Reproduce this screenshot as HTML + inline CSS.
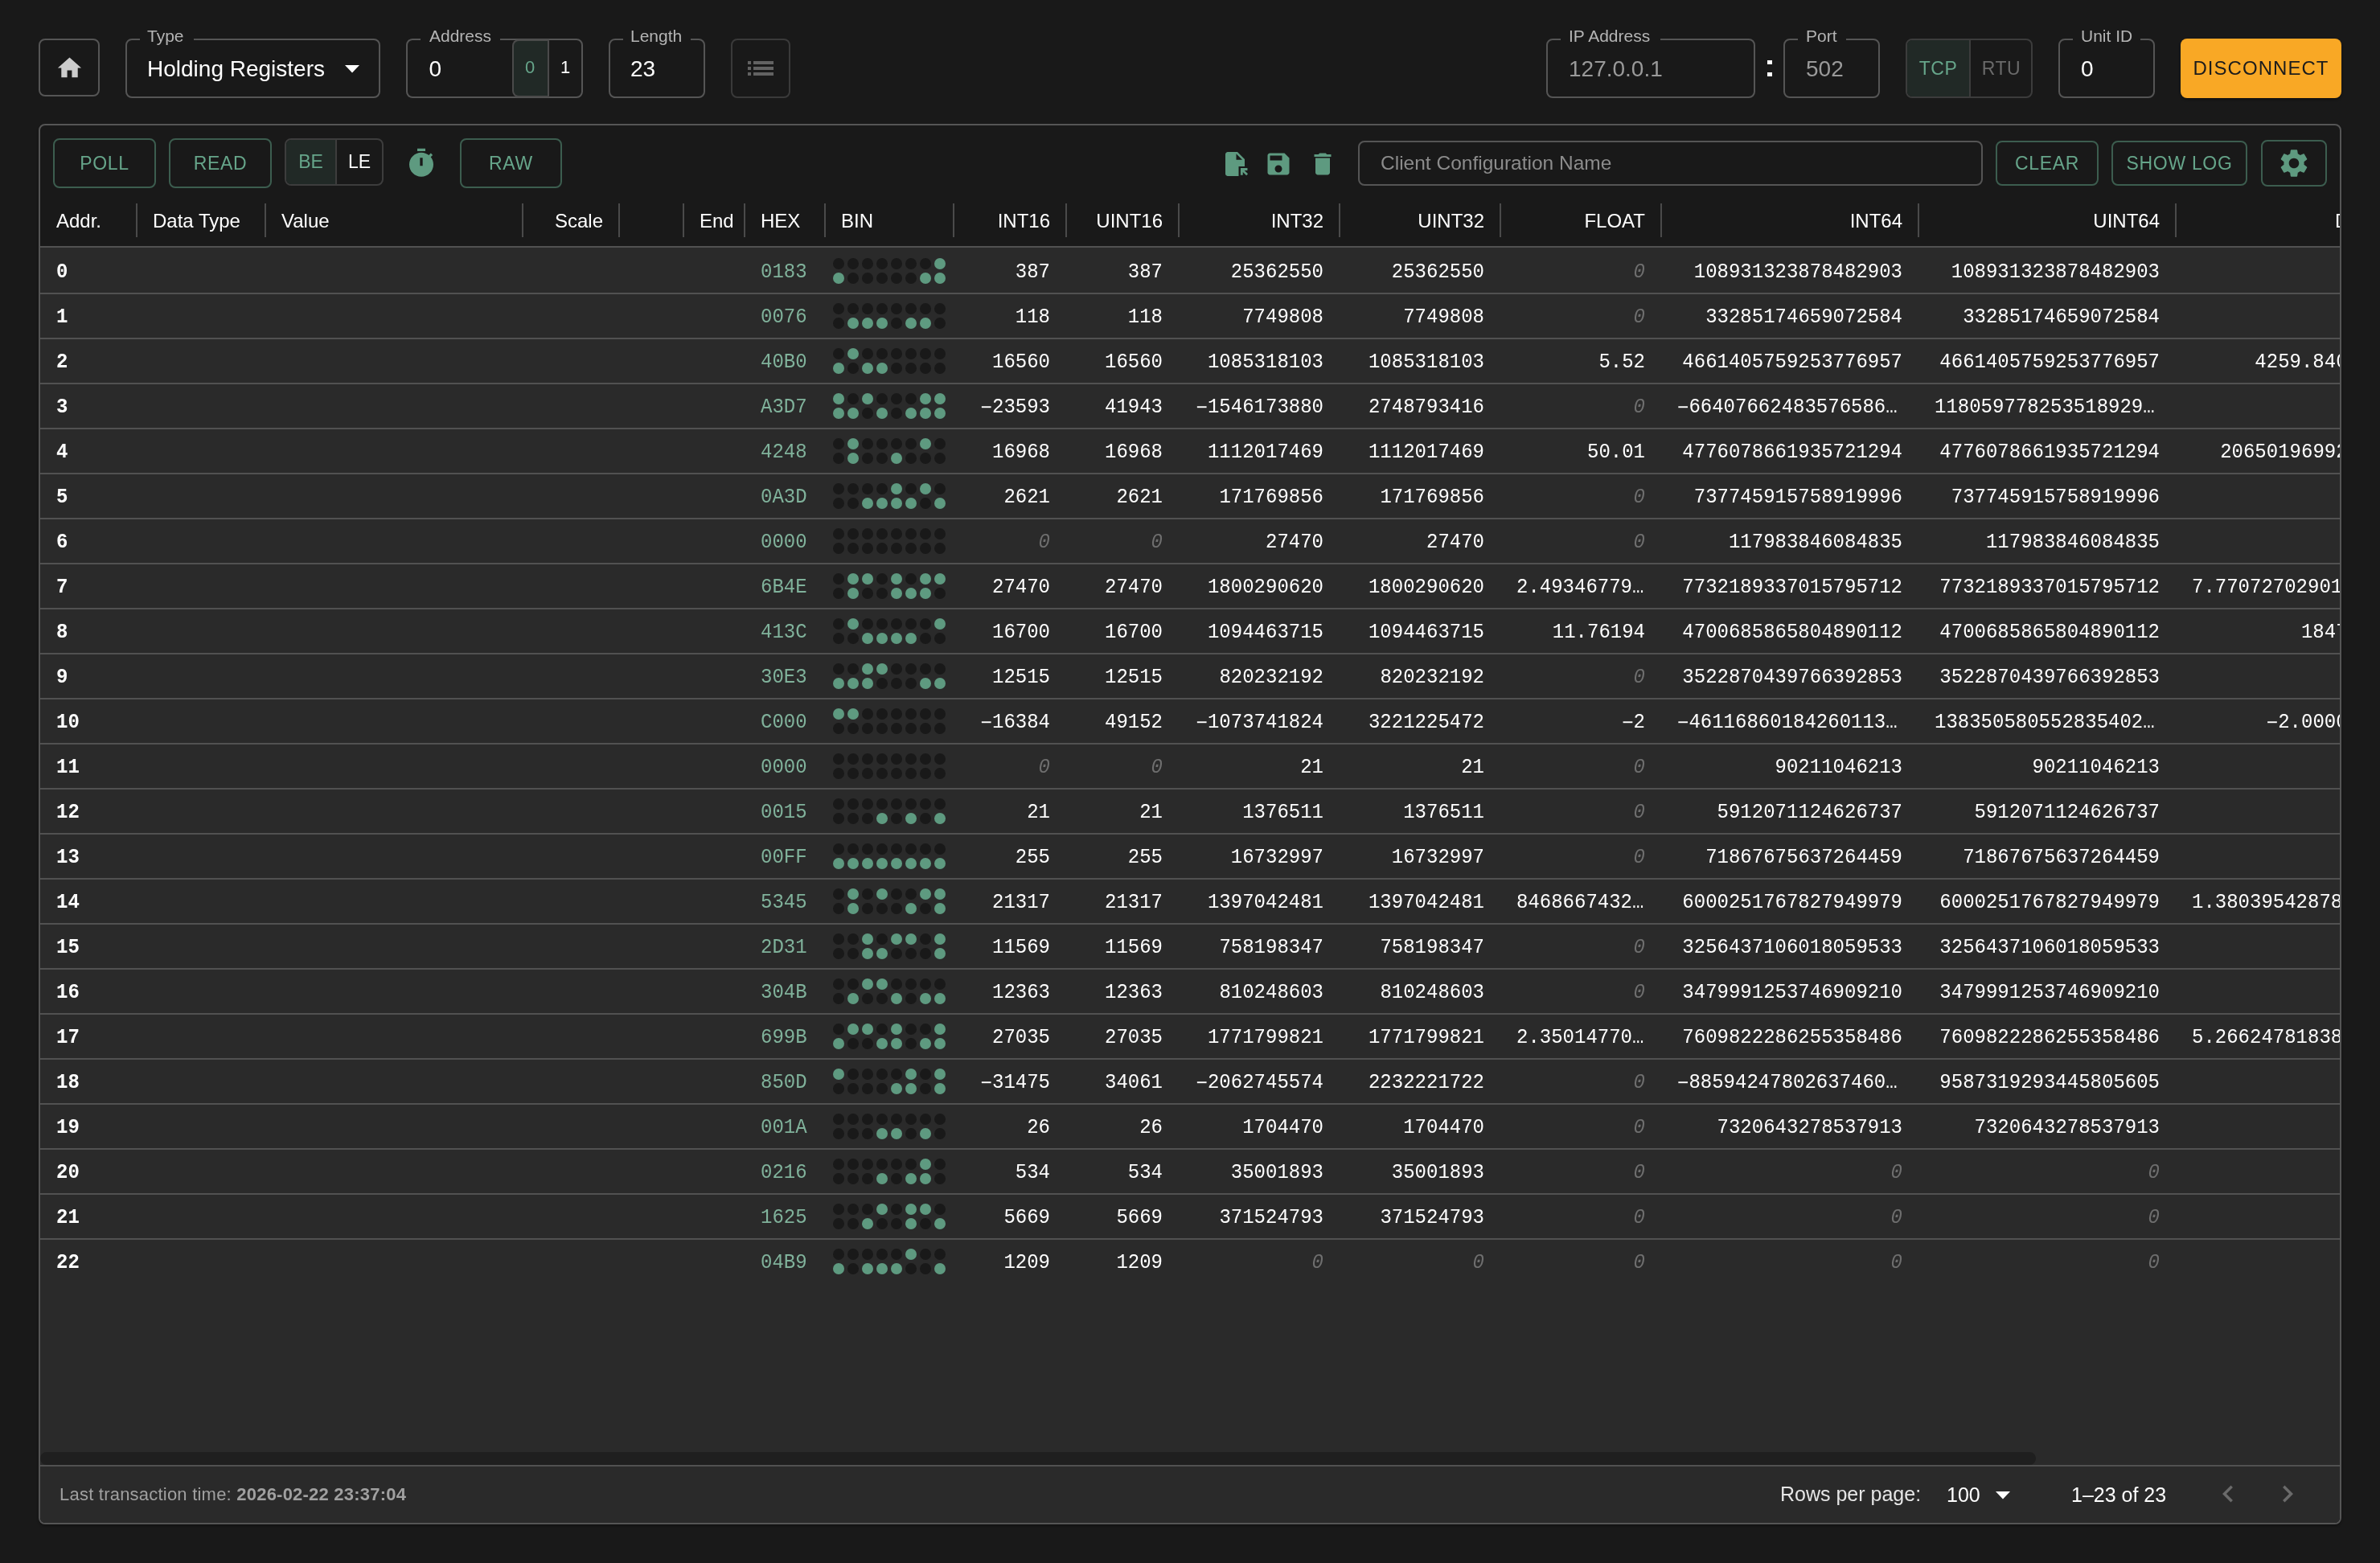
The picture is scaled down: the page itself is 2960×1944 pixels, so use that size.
<!DOCTYPE html>
<html><head><meta charset="utf-8"><title>Modbus Client</title>
<style>
*{box-sizing:border-box;margin:0;padding:0}
html,body{width:2960px;height:1944px;overflow:hidden;background:#191919}
body{position:relative;font-family:"Liberation Sans",sans-serif;color:#fff}
.a{position:absolute}
.box{position:absolute;border:2px solid #555555;border-radius:8px}
.lbl{position:absolute;font-size:21px;line-height:24px;color:#b4b4b4;white-space:nowrap}
.notch{position:absolute;height:4px;background:#191919}
.val{position:absolute;font-size:28px;line-height:32px;white-space:nowrap}
.gbtn{position:absolute;border:2px solid #3c5d4f;border-radius:8px;color:#66a58a;font-size:23px;letter-spacing:0.7px;text-align:center;white-space:nowrap}
.hd{position:absolute;top:259px;height:32px;line-height:32px;font-size:24px;white-space:nowrap}
.sep{position:absolute;top:253px;width:2px;height:42px;background:#4a4a4a}
.row{position:absolute;left:50px;width:2860px;height:56px}
.c{position:absolute;top:0;height:56px;line-height:56px;font-family:"Liberation Mono",monospace;font-size:24px;white-space:nowrap;overflow:hidden;padding-top:3px;transform:scaleY(1.07);transform-origin:0 37px}
.r{text-align:right}
.z{color:#6e6e6e;font-style:italic}
.el{text-overflow:ellipsis}
.dot{position:absolute;width:14px;height:14px;border-radius:7px;background:#191919}
.on{background:#5e9a80}
</style></head><body><div id="root" style="position:absolute;left:0;top:0;width:2960px;height:1944px;will-change:transform">

<div class="box" style="left:48px;top:48px;width:76px;height:72px"></div>
<svg class="a" style="left:68.5px;top:66.5px" width="35" height="35" viewBox="0 0 24 24"><path fill="#cccccc" d="M10 20v-6h4v6h5v-8h3L12 3 2 12h3v8z"/></svg>
<div class="box" style="left:156px;top:48px;width:317px;height:74px"></div>
<div class="notch" style="left:174px;top:47px;width:67px"></div>
<div class="lbl" style="left:183px;top:33px">Type</div>
<div class="val" style="left:183px;top:70px;color:#fff">Holding Registers</div>
<svg class="a" style="left:429px;top:81px" width="18" height="10" viewBox="0 0 18 10"><path fill="#fff" d="M0 0h18L9 9.5z"/></svg>
<div class="box" style="left:505px;top:48px;width:220px;height:74px"></div>
<div class="notch" style="left:523px;top:47px;width:99px"></div>
<div class="lbl" style="left:534px;top:33px">Address</div>
<div class="val" style="left:533.5px;top:70px;color:#fff">0</div>
<div class="a" style="left:637px;top:49px;width:46px;height:72px;background:#212926;border:2px solid #4a4a4a;border-right:none;border-radius:8px 0 0 8px"></div>
<div class="a" style="left:681px;top:49px;width:2px;height:72px;background:#4a4a4a"></div>
<div class="a" style="left:636px;top:66px;width:46px;text-align:center;font-size:22px;line-height:36px;color:#66a58a">0</div>
<div class="a" style="left:683px;top:66px;width:40px;text-align:center;font-size:22px;line-height:36px;color:#fff">1</div>
<div class="box" style="left:757px;top:48px;width:120px;height:74px"></div>
<div class="notch" style="left:775px;top:47px;width:84px"></div>
<div class="lbl" style="left:784px;top:33px">Length</div>
<div class="val" style="left:784px;top:70px;color:#fff">23</div>
<div class="box" style="left:909px;top:48px;width:74px;height:74px;border-color:#3a3a3a"></div>
<div class="a" style="left:930px;top:76px;width:4px;height:4px;background:#626262"></div>
<div class="a" style="left:937px;top:76px;width:25px;height:4px;background:#626262"></div>
<div class="a" style="left:930px;top:83px;width:4px;height:4px;background:#626262"></div>
<div class="a" style="left:937px;top:83px;width:25px;height:4px;background:#626262"></div>
<div class="a" style="left:930px;top:90px;width:4px;height:4px;background:#626262"></div>
<div class="a" style="left:937px;top:90px;width:25px;height:4px;background:#626262"></div>
<div class="box" style="left:1923px;top:48px;width:260px;height:74px"></div>
<div class="notch" style="left:1941px;top:47px;width:124px"></div>
<div class="lbl" style="left:1951px;top:33px">IP Address</div>
<div class="val" style="left:1951px;top:70px;color:#9a9a9a">127.0.0.1</div>
<div class="a" style="left:2198px;top:75px;width:6px;height:5px;background:#fff"></div><div class="a" style="left:2198px;top:90px;width:6px;height:5px;background:#fff"></div>
<div class="box" style="left:2218px;top:48px;width:120px;height:74px"></div>
<div class="notch" style="left:2236px;top:47px;width:60px"></div>
<div class="lbl" style="left:2246px;top:33px">Port</div>
<div class="val" style="left:2246px;top:70px;color:#9a9a9a">502</div>
<div class="box" style="left:2370px;top:48px;width:158px;height:74px;border-color:#3c3c3c"></div>
<div class="a" style="left:2372px;top:50px;width:77px;height:70px;background:#212926;border-radius:6px 0 0 6px"></div>
<div class="a" style="left:2449px;top:50px;width:2px;height:70px;background:#3c3c3c"></div>
<div class="a" style="left:2372px;top:67px;width:77px;text-align:center;font-size:23px;line-height:36px;color:#66a58a;letter-spacing:0.5px">TCP</div>
<div class="a" style="left:2451px;top:67px;width:76px;text-align:center;font-size:23px;line-height:36px;color:#6a6a6a;letter-spacing:0.5px">RTU</div>
<div class="box" style="left:2560px;top:48px;width:120px;height:74px"></div>
<div class="notch" style="left:2578px;top:47px;width:84px"></div>
<div class="lbl" style="left:2588px;top:33px">Unit ID</div>
<div class="val" style="left:2588px;top:70px;color:#fff">0</div>
<div class="a" style="left:2712px;top:48px;width:200px;height:74px;background:#f9a825;border-radius:8px;box-shadow:0 2px 3px rgba(0,0,0,.35);color:#1c1c1c;font-size:24px;line-height:74px;text-align:center;letter-spacing:1.05px">DISCONNECT</div>
<div class="a" style="left:48px;top:154px;width:2864px;height:1742px;border:2px solid #555555;border-radius:8px;overflow:hidden;box-shadow:0 2px 3px rgba(0,0,0,.3)">
</div>
<div class="gbtn" style="left:66px;top:172px;width:128px;height:62px;line-height:58px">POLL</div>
<div class="gbtn" style="left:210px;top:172px;width:128px;height:62px;line-height:58px">READ</div>
<div class="box" style="left:354px;top:172px;width:123px;height:59px;border-color:#3d3d3d"></div>
<div class="a" style="left:356px;top:174px;width:61px;height:55px;background:#212926;border-radius:6px 0 0 6px"></div>
<div class="a" style="left:417px;top:174px;width:2px;height:55px;background:#3d3d3d"></div>
<div class="a" style="left:356px;top:172px;width:61px;text-align:center;font-size:23px;line-height:59px;color:#66a58a">BE</div>
<div class="a" style="left:419px;top:172px;width:56px;text-align:center;font-size:23px;line-height:59px;color:#fff">LE</div>
<svg class="a" style="left:504px;top:183px" width="40" height="40" viewBox="0 0 24 24"><path fill="#5e9a80" d="M9 1h6v2H9zm10.03 6.39 1.42-1.42c-.43-.51-.9-.99-1.41-1.41l-1.42 1.42C16.07 4.74 14.12 4 12 4c-4.97 0-9 4.03-9 9s4.02 9 9 9 9-4.03 9-9c0-2.12-.74-4.07-1.97-5.61M13 14h-2V8h2z"/></svg>
<div class="gbtn" style="left:572px;top:172px;width:127px;height:62px;line-height:58px">RAW</div>
<svg class="a" style="left:1518px;top:186px" width="36" height="36" viewBox="0 0 24 24"><path fill="#5e9a80" d="M6 2h8l6 6v6h-5v8H6c-1.1 0-2-.9-2-2V4c0-1.1.9-2 2-2zm7 1.5V8.5h5z M16.6 15.4h5.7v1.9h-2.5l2.9 2.9-1.3 1.3-2.9-2.9v2.6h-1.9z" fill-rule="evenodd"/></svg>
<svg class="a" style="left:1572px;top:186px" width="36" height="36" viewBox="0 0 24 24"><path fill="#5e9a80" d="M17 3H5c-1.11 0-2 .9-2 2v14c0 1.1.89 2 2 2h14c1.1 0 2-.9 2-2V7zm-5 16c-1.66 0-3-1.34-3-3s1.34-3 3-3 3 1.34 3 3-1.34 3-3 3m3-10H5V5h10z"/></svg>
<svg class="a" style="left:1627px;top:186px" width="36" height="36" viewBox="0 0 24 24"><path fill="#5e9a80" d="M6 19c0 1.1.9 2 2 2h8c1.1 0 2-.9 2-2V7H6zM19 4h-3.5l-1-1h-5l-1 1H5v2h14z"/></svg>
<div class="box" style="left:1689px;top:175px;width:777px;height:56px"></div>
<div class="a" style="left:1717px;top:185px;font-size:24.5px;line-height:36px;color:#8c8c8c;white-space:nowrap">Client Configuration Name</div>
<div class="gbtn" style="left:2482px;top:175px;width:128px;height:56px;line-height:52px">CLEAR</div>
<div class="gbtn" style="left:2626px;top:175px;width:169px;height:56px;line-height:52px">SHOW LOG</div>
<div class="gbtn" style="left:2812px;top:174px;width:82px;height:58px"></div>
<svg class="a" style="left:2832px;top:182px" width="42" height="42" viewBox="0 0 24 24"><path fill="#5e9a80" d="M19.14 12.94c.04-.3.06-.61.06-.94 0-.32-.02-.64-.07-.94l2.03-1.58c.18-.14.23-.41.12-.61l-1.92-3.32c-.12-.22-.37-.29-.59-.22l-2.39.96c-.5-.38-1.03-.7-1.62-.94l-.36-2.54c-.04-.24-.24-.41-.48-.41h-3.84c-.24 0-.43.17-.47.41l-.36 2.54c-.59.24-1.13.57-1.62.94l-2.39-.96c-.22-.08-.47 0-.59.22L2.74 8.87c-.12.21-.08.47.12.61l2.03 1.58c-.05.3-.09.63-.09.94s.02.64.07.94l-2.03 1.58c-.18.14-.23.41-.12.61l1.92 3.32c.12.22.37.29.59.22l2.39-.96c.5.38 1.03.7 1.62.94l.36 2.54c.05.24.24.41.48.41h3.84c.24 0 .44-.17.47-.41l.36-2.54c.59-.24 1.13-.56 1.62-.94l2.39.96c.22.08.47 0 .59-.22l1.92-3.32c.12-.22.07-.47-.12-.61zM12 15.6c-1.98 0-3.6-1.62-3.6-3.6s1.62-3.6 3.6-3.6 3.6 1.62 3.6 3.6-1.62 3.6-3.6 3.6"/></svg>
<div class="a" style="left:50px;top:156px;width:2860px;height:1738px;overflow:hidden;border-radius:0 0 6px 6px">
<div class="hd" style="left:20px;top:103px">Addr.</div>
<div class="hd" style="left:140px;top:103px">Data Type</div>
<div class="hd" style="left:300px;top:103px">Value</div>
<div class="hd" style="left:600px;top:103px;width:100px;text-align:right">Scale</div>
<div class="hd" style="left:820px;top:103px">End</div>
<div class="hd" style="left:896px;top:103px">HEX</div>
<div class="hd" style="left:996px;top:103px">BIN</div>
<div class="hd" style="left:1136px;top:103px;width:120px;text-align:right">INT16</div>
<div class="hd" style="left:1276px;top:103px;width:120px;text-align:right">UINT16</div>
<div class="hd" style="left:1416px;top:103px;width:180px;text-align:right">INT32</div>
<div class="hd" style="left:1616px;top:103px;width:180px;text-align:right">UINT32</div>
<div class="hd" style="left:1816px;top:103px;width:180px;text-align:right">FLOAT</div>
<div class="hd" style="left:2016px;top:103px;width:300px;text-align:right">INT64</div>
<div class="hd" style="left:2336px;top:103px;width:300px;text-align:right">UINT64</div>
<div class="hd" style="left:2854px;top:103px">DOUBLE</div>
<div class="sep" style="left:119px;top:97px"></div>
<div class="sep" style="left:279px;top:97px"></div>
<div class="sep" style="left:599px;top:97px"></div>
<div class="sep" style="left:719px;top:97px"></div>
<div class="sep" style="left:799px;top:97px"></div>
<div class="sep" style="left:875px;top:97px"></div>
<div class="sep" style="left:975px;top:97px"></div>
<div class="sep" style="left:1135px;top:97px"></div>
<div class="sep" style="left:1275px;top:97px"></div>
<div class="sep" style="left:1415px;top:97px"></div>
<div class="sep" style="left:1615px;top:97px"></div>
<div class="sep" style="left:1815px;top:97px"></div>
<div class="sep" style="left:2015px;top:97px"></div>
<div class="sep" style="left:2335px;top:97px"></div>
<div class="sep" style="left:2655px;top:97px"></div>
<div class="a" style="left:0;top:150px;width:2860px;height:2px;background:#515151"></div>
<div class="a" style="left:0;top:152px;width:2860px;height:1514px;background:#2a2a2a"></div>
<div class="a" style="left:0;top:208px;width:2860px;height:2px;background:#515151"></div>
<div class="a" style="left:0;top:264px;width:2860px;height:2px;background:#515151"></div>
<div class="a" style="left:0;top:320px;width:2860px;height:2px;background:#515151"></div>
<div class="a" style="left:0;top:376px;width:2860px;height:2px;background:#515151"></div>
<div class="a" style="left:0;top:432px;width:2860px;height:2px;background:#515151"></div>
<div class="a" style="left:0;top:488px;width:2860px;height:2px;background:#515151"></div>
<div class="a" style="left:0;top:544px;width:2860px;height:2px;background:#515151"></div>
<div class="a" style="left:0;top:600px;width:2860px;height:2px;background:#515151"></div>
<div class="a" style="left:0;top:656px;width:2860px;height:2px;background:#515151"></div>
<div class="a" style="left:0;top:712px;width:2860px;height:2px;background:#515151"></div>
<div class="a" style="left:0;top:768px;width:2860px;height:2px;background:#515151"></div>
<div class="a" style="left:0;top:824px;width:2860px;height:2px;background:#515151"></div>
<div class="a" style="left:0;top:880px;width:2860px;height:2px;background:#515151"></div>
<div class="a" style="left:0;top:936px;width:2860px;height:2px;background:#515151"></div>
<div class="a" style="left:0;top:992px;width:2860px;height:2px;background:#515151"></div>
<div class="a" style="left:0;top:1048px;width:2860px;height:2px;background:#515151"></div>
<div class="a" style="left:0;top:1104px;width:2860px;height:2px;background:#515151"></div>
<div class="a" style="left:0;top:1160px;width:2860px;height:2px;background:#515151"></div>
<div class="a" style="left:0;top:1216px;width:2860px;height:2px;background:#515151"></div>
<div class="a" style="left:0;top:1272px;width:2860px;height:2px;background:#515151"></div>
<div class="a" style="left:0;top:1328px;width:2860px;height:2px;background:#515151"></div>
<div class="a" style="left:0;top:1384px;width:2860px;height:2px;background:#515151"></div>
<div class="row" style="left:0;top:152px">
<div class="c" style="left:20px;font-weight:bold">0</div>
<div class="c" style="left:896px;color:#80b29b">0183</div>
<div class="dot" style="left:986px;top:13px"></div>
<div class="dot" style="left:1004px;top:13px"></div>
<div class="dot" style="left:1022px;top:13px"></div>
<div class="dot" style="left:1040px;top:13px"></div>
<div class="dot" style="left:1058px;top:13px"></div>
<div class="dot" style="left:1076px;top:13px"></div>
<div class="dot" style="left:1094px;top:13px"></div>
<div class="dot on" style="left:1112px;top:13px"></div>
<div class="dot on" style="left:986px;top:31px"></div>
<div class="dot" style="left:1004px;top:31px"></div>
<div class="dot" style="left:1022px;top:31px"></div>
<div class="dot" style="left:1040px;top:31px"></div>
<div class="dot" style="left:1058px;top:31px"></div>
<div class="dot" style="left:1076px;top:31px"></div>
<div class="dot on" style="left:1094px;top:31px"></div>
<div class="dot on" style="left:1112px;top:31px"></div>
<div class="c r" style="left:1156px;width:100px">387</div>
<div class="c r" style="left:1296px;width:100px">387</div>
<div class="c r" style="left:1436px;width:160px">25362550</div>
<div class="c r" style="left:1636px;width:160px">25362550</div>
<div class="c r z" style="left:1836px;width:160px">0</div>
<div class="c r" style="left:2036px;width:280px">108931323878482903</div>
<div class="c r" style="left:2356px;width:280px">108931323878482903</div>
<div class="c r z" style="left:2676px;width:280px">0</div>
</div>
<div class="row" style="left:0;top:208px">
<div class="c" style="left:20px;font-weight:bold">1</div>
<div class="c" style="left:896px;color:#80b29b">0076</div>
<div class="dot" style="left:986px;top:13px"></div>
<div class="dot" style="left:1004px;top:13px"></div>
<div class="dot" style="left:1022px;top:13px"></div>
<div class="dot" style="left:1040px;top:13px"></div>
<div class="dot" style="left:1058px;top:13px"></div>
<div class="dot" style="left:1076px;top:13px"></div>
<div class="dot" style="left:1094px;top:13px"></div>
<div class="dot" style="left:1112px;top:13px"></div>
<div class="dot" style="left:986px;top:31px"></div>
<div class="dot on" style="left:1004px;top:31px"></div>
<div class="dot on" style="left:1022px;top:31px"></div>
<div class="dot on" style="left:1040px;top:31px"></div>
<div class="dot" style="left:1058px;top:31px"></div>
<div class="dot on" style="left:1076px;top:31px"></div>
<div class="dot on" style="left:1094px;top:31px"></div>
<div class="dot" style="left:1112px;top:31px"></div>
<div class="c r" style="left:1156px;width:100px">118</div>
<div class="c r" style="left:1296px;width:100px">118</div>
<div class="c r" style="left:1436px;width:160px">7749808</div>
<div class="c r" style="left:1636px;width:160px">7749808</div>
<div class="c r z" style="left:1836px;width:160px">0</div>
<div class="c r" style="left:2036px;width:280px">33285174659072584</div>
<div class="c r" style="left:2356px;width:280px">33285174659072584</div>
<div class="c r z" style="left:2676px;width:280px">0</div>
</div>
<div class="row" style="left:0;top:264px">
<div class="c" style="left:20px;font-weight:bold">2</div>
<div class="c" style="left:896px;color:#80b29b">40B0</div>
<div class="dot" style="left:986px;top:13px"></div>
<div class="dot on" style="left:1004px;top:13px"></div>
<div class="dot" style="left:1022px;top:13px"></div>
<div class="dot" style="left:1040px;top:13px"></div>
<div class="dot" style="left:1058px;top:13px"></div>
<div class="dot" style="left:1076px;top:13px"></div>
<div class="dot" style="left:1094px;top:13px"></div>
<div class="dot" style="left:1112px;top:13px"></div>
<div class="dot on" style="left:986px;top:31px"></div>
<div class="dot" style="left:1004px;top:31px"></div>
<div class="dot on" style="left:1022px;top:31px"></div>
<div class="dot on" style="left:1040px;top:31px"></div>
<div class="dot" style="left:1058px;top:31px"></div>
<div class="dot" style="left:1076px;top:31px"></div>
<div class="dot" style="left:1094px;top:31px"></div>
<div class="dot" style="left:1112px;top:31px"></div>
<div class="c r" style="left:1156px;width:100px">16560</div>
<div class="c r" style="left:1296px;width:100px">16560</div>
<div class="c r" style="left:1436px;width:160px">1085318103</div>
<div class="c r" style="left:1636px;width:160px">1085318103</div>
<div class="c r" style="left:1836px;width:160px">5.52</div>
<div class="c r" style="left:2036px;width:280px">4661405759253776957</div>
<div class="c r" style="left:2356px;width:280px">4661405759253776957</div>
<div class="c r" style="left:2676px;width:280px">4259.840855124</div>
</div>
<div class="row" style="left:0;top:320px">
<div class="c" style="left:20px;font-weight:bold">3</div>
<div class="c" style="left:896px;color:#80b29b">A3D7</div>
<div class="dot on" style="left:986px;top:13px"></div>
<div class="dot" style="left:1004px;top:13px"></div>
<div class="dot on" style="left:1022px;top:13px"></div>
<div class="dot" style="left:1040px;top:13px"></div>
<div class="dot" style="left:1058px;top:13px"></div>
<div class="dot" style="left:1076px;top:13px"></div>
<div class="dot on" style="left:1094px;top:13px"></div>
<div class="dot on" style="left:1112px;top:13px"></div>
<div class="dot on" style="left:986px;top:31px"></div>
<div class="dot on" style="left:1004px;top:31px"></div>
<div class="dot" style="left:1022px;top:31px"></div>
<div class="dot on" style="left:1040px;top:31px"></div>
<div class="dot" style="left:1058px;top:31px"></div>
<div class="dot on" style="left:1076px;top:31px"></div>
<div class="dot on" style="left:1094px;top:31px"></div>
<div class="dot on" style="left:1112px;top:31px"></div>
<div class="c r" style="left:1156px;width:100px"><span style="position:relative;top:2px">−</span>23593</div>
<div class="c r" style="left:1296px;width:100px">41943</div>
<div class="c r" style="left:1436px;width:160px"><span style="position:relative;top:2px">−</span>1546173880</div>
<div class="c r" style="left:1636px;width:160px">2748793416</div>
<div class="c r z" style="left:1836px;width:160px">0</div>
<div class="c el" style="left:2036px;width:280px"><span style="position:relative;top:2px">−</span>66407662483576586…</div>
<div class="c el" style="left:2356px;width:280px">118059778253518929…</div>
<div class="c r z" style="left:2676px;width:280px">0</div>
</div>
<div class="row" style="left:0;top:376px">
<div class="c" style="left:20px;font-weight:bold">4</div>
<div class="c" style="left:896px;color:#80b29b">4248</div>
<div class="dot" style="left:986px;top:13px"></div>
<div class="dot on" style="left:1004px;top:13px"></div>
<div class="dot" style="left:1022px;top:13px"></div>
<div class="dot" style="left:1040px;top:13px"></div>
<div class="dot" style="left:1058px;top:13px"></div>
<div class="dot" style="left:1076px;top:13px"></div>
<div class="dot on" style="left:1094px;top:13px"></div>
<div class="dot" style="left:1112px;top:13px"></div>
<div class="dot" style="left:986px;top:31px"></div>
<div class="dot on" style="left:1004px;top:31px"></div>
<div class="dot" style="left:1022px;top:31px"></div>
<div class="dot" style="left:1040px;top:31px"></div>
<div class="dot on" style="left:1058px;top:31px"></div>
<div class="dot" style="left:1076px;top:31px"></div>
<div class="dot" style="left:1094px;top:31px"></div>
<div class="dot" style="left:1112px;top:31px"></div>
<div class="c r" style="left:1156px;width:100px">16968</div>
<div class="c r" style="left:1296px;width:100px">16968</div>
<div class="c r" style="left:1436px;width:160px">1112017469</div>
<div class="c r" style="left:1636px;width:160px">1112017469</div>
<div class="c r" style="left:1836px;width:160px">50.01</div>
<div class="c r" style="left:2036px;width:280px">4776078661935721294</div>
<div class="c r" style="left:2356px;width:280px">4776078661935721294</div>
<div class="c r" style="left:2676px;width:280px">206501969920.8383</div>
</div>
<div class="row" style="left:0;top:432px">
<div class="c" style="left:20px;font-weight:bold">5</div>
<div class="c" style="left:896px;color:#80b29b">0A3D</div>
<div class="dot" style="left:986px;top:13px"></div>
<div class="dot" style="left:1004px;top:13px"></div>
<div class="dot" style="left:1022px;top:13px"></div>
<div class="dot" style="left:1040px;top:13px"></div>
<div class="dot on" style="left:1058px;top:13px"></div>
<div class="dot" style="left:1076px;top:13px"></div>
<div class="dot on" style="left:1094px;top:13px"></div>
<div class="dot" style="left:1112px;top:13px"></div>
<div class="dot" style="left:986px;top:31px"></div>
<div class="dot" style="left:1004px;top:31px"></div>
<div class="dot on" style="left:1022px;top:31px"></div>
<div class="dot on" style="left:1040px;top:31px"></div>
<div class="dot on" style="left:1058px;top:31px"></div>
<div class="dot on" style="left:1076px;top:31px"></div>
<div class="dot" style="left:1094px;top:31px"></div>
<div class="dot on" style="left:1112px;top:31px"></div>
<div class="c r" style="left:1156px;width:100px">2621</div>
<div class="c r" style="left:1296px;width:100px">2621</div>
<div class="c r" style="left:1436px;width:160px">171769856</div>
<div class="c r" style="left:1636px;width:160px">171769856</div>
<div class="c r z" style="left:1836px;width:160px">0</div>
<div class="c r" style="left:2036px;width:280px">737745915758919996</div>
<div class="c r" style="left:2356px;width:280px">737745915758919996</div>
<div class="c r z" style="left:2676px;width:280px">0</div>
</div>
<div class="row" style="left:0;top:488px">
<div class="c" style="left:20px;font-weight:bold">6</div>
<div class="c" style="left:896px;color:#80b29b">0000</div>
<div class="dot" style="left:986px;top:13px"></div>
<div class="dot" style="left:1004px;top:13px"></div>
<div class="dot" style="left:1022px;top:13px"></div>
<div class="dot" style="left:1040px;top:13px"></div>
<div class="dot" style="left:1058px;top:13px"></div>
<div class="dot" style="left:1076px;top:13px"></div>
<div class="dot" style="left:1094px;top:13px"></div>
<div class="dot" style="left:1112px;top:13px"></div>
<div class="dot" style="left:986px;top:31px"></div>
<div class="dot" style="left:1004px;top:31px"></div>
<div class="dot" style="left:1022px;top:31px"></div>
<div class="dot" style="left:1040px;top:31px"></div>
<div class="dot" style="left:1058px;top:31px"></div>
<div class="dot" style="left:1076px;top:31px"></div>
<div class="dot" style="left:1094px;top:31px"></div>
<div class="dot" style="left:1112px;top:31px"></div>
<div class="c r z" style="left:1156px;width:100px">0</div>
<div class="c r z" style="left:1296px;width:100px">0</div>
<div class="c r" style="left:1436px;width:160px">27470</div>
<div class="c r" style="left:1636px;width:160px">27470</div>
<div class="c r z" style="left:1836px;width:160px">0</div>
<div class="c r" style="left:2036px;width:280px">117983846084835</div>
<div class="c r" style="left:2356px;width:280px">117983846084835</div>
<div class="c r z" style="left:2676px;width:280px">0</div>
</div>
<div class="row" style="left:0;top:544px">
<div class="c" style="left:20px;font-weight:bold">7</div>
<div class="c" style="left:896px;color:#80b29b">6B4E</div>
<div class="dot" style="left:986px;top:13px"></div>
<div class="dot on" style="left:1004px;top:13px"></div>
<div class="dot on" style="left:1022px;top:13px"></div>
<div class="dot" style="left:1040px;top:13px"></div>
<div class="dot on" style="left:1058px;top:13px"></div>
<div class="dot" style="left:1076px;top:13px"></div>
<div class="dot on" style="left:1094px;top:13px"></div>
<div class="dot on" style="left:1112px;top:13px"></div>
<div class="dot" style="left:986px;top:31px"></div>
<div class="dot on" style="left:1004px;top:31px"></div>
<div class="dot" style="left:1022px;top:31px"></div>
<div class="dot" style="left:1040px;top:31px"></div>
<div class="dot on" style="left:1058px;top:31px"></div>
<div class="dot on" style="left:1076px;top:31px"></div>
<div class="dot on" style="left:1094px;top:31px"></div>
<div class="dot" style="left:1112px;top:31px"></div>
<div class="c r" style="left:1156px;width:100px">27470</div>
<div class="c r" style="left:1296px;width:100px">27470</div>
<div class="c r" style="left:1436px;width:160px">1800290620</div>
<div class="c r" style="left:1636px;width:160px">1800290620</div>
<div class="c el" style="left:1836px;width:160px">2.49346779…</div>
<div class="c r" style="left:2036px;width:280px">7732189337015795712</div>
<div class="c r" style="left:2356px;width:280px">7732189337015795712</div>
<div class="c el" style="left:2676px;width:280px">7.770727029016266e…</div>
</div>
<div class="row" style="left:0;top:600px">
<div class="c" style="left:20px;font-weight:bold">8</div>
<div class="c" style="left:896px;color:#80b29b">413C</div>
<div class="dot" style="left:986px;top:13px"></div>
<div class="dot on" style="left:1004px;top:13px"></div>
<div class="dot" style="left:1022px;top:13px"></div>
<div class="dot" style="left:1040px;top:13px"></div>
<div class="dot" style="left:1058px;top:13px"></div>
<div class="dot" style="left:1076px;top:13px"></div>
<div class="dot" style="left:1094px;top:13px"></div>
<div class="dot on" style="left:1112px;top:13px"></div>
<div class="dot" style="left:986px;top:31px"></div>
<div class="dot" style="left:1004px;top:31px"></div>
<div class="dot on" style="left:1022px;top:31px"></div>
<div class="dot on" style="left:1040px;top:31px"></div>
<div class="dot on" style="left:1058px;top:31px"></div>
<div class="dot on" style="left:1076px;top:31px"></div>
<div class="dot" style="left:1094px;top:31px"></div>
<div class="dot" style="left:1112px;top:31px"></div>
<div class="c r" style="left:1156px;width:100px">16700</div>
<div class="c r" style="left:1296px;width:100px">16700</div>
<div class="c r" style="left:1436px;width:160px">1094463715</div>
<div class="c r" style="left:1636px;width:160px">1094463715</div>
<div class="c r" style="left:1836px;width:160px">11.76194</div>
<div class="c r" style="left:2036px;width:280px">4700685865804890112</div>
<div class="c r" style="left:2356px;width:280px">4700685865804890112</div>
<div class="c r" style="left:2676px;width:280px">1847523.75</div>
</div>
<div class="row" style="left:0;top:656px">
<div class="c" style="left:20px;font-weight:bold">9</div>
<div class="c" style="left:896px;color:#80b29b">30E3</div>
<div class="dot" style="left:986px;top:13px"></div>
<div class="dot" style="left:1004px;top:13px"></div>
<div class="dot on" style="left:1022px;top:13px"></div>
<div class="dot on" style="left:1040px;top:13px"></div>
<div class="dot" style="left:1058px;top:13px"></div>
<div class="dot" style="left:1076px;top:13px"></div>
<div class="dot" style="left:1094px;top:13px"></div>
<div class="dot" style="left:1112px;top:13px"></div>
<div class="dot on" style="left:986px;top:31px"></div>
<div class="dot on" style="left:1004px;top:31px"></div>
<div class="dot on" style="left:1022px;top:31px"></div>
<div class="dot" style="left:1040px;top:31px"></div>
<div class="dot" style="left:1058px;top:31px"></div>
<div class="dot" style="left:1076px;top:31px"></div>
<div class="dot on" style="left:1094px;top:31px"></div>
<div class="dot on" style="left:1112px;top:31px"></div>
<div class="c r" style="left:1156px;width:100px">12515</div>
<div class="c r" style="left:1296px;width:100px">12515</div>
<div class="c r" style="left:1436px;width:160px">820232192</div>
<div class="c r" style="left:1636px;width:160px">820232192</div>
<div class="c r z" style="left:1836px;width:160px">0</div>
<div class="c r" style="left:2036px;width:280px">3522870439766392853</div>
<div class="c r" style="left:2356px;width:280px">3522870439766392853</div>
<div class="c r z" style="left:2676px;width:280px">0</div>
</div>
<div class="row" style="left:0;top:712px">
<div class="c" style="left:20px;font-weight:bold">10</div>
<div class="c" style="left:896px;color:#80b29b">C000</div>
<div class="dot on" style="left:986px;top:13px"></div>
<div class="dot on" style="left:1004px;top:13px"></div>
<div class="dot" style="left:1022px;top:13px"></div>
<div class="dot" style="left:1040px;top:13px"></div>
<div class="dot" style="left:1058px;top:13px"></div>
<div class="dot" style="left:1076px;top:13px"></div>
<div class="dot" style="left:1094px;top:13px"></div>
<div class="dot" style="left:1112px;top:13px"></div>
<div class="dot" style="left:986px;top:31px"></div>
<div class="dot" style="left:1004px;top:31px"></div>
<div class="dot" style="left:1022px;top:31px"></div>
<div class="dot" style="left:1040px;top:31px"></div>
<div class="dot" style="left:1058px;top:31px"></div>
<div class="dot" style="left:1076px;top:31px"></div>
<div class="dot" style="left:1094px;top:31px"></div>
<div class="dot" style="left:1112px;top:31px"></div>
<div class="c r" style="left:1156px;width:100px"><span style="position:relative;top:2px">−</span>16384</div>
<div class="c r" style="left:1296px;width:100px">49152</div>
<div class="c r" style="left:1436px;width:160px"><span style="position:relative;top:2px">−</span>1073741824</div>
<div class="c r" style="left:1636px;width:160px">3221225472</div>
<div class="c r" style="left:1836px;width:160px"><span style="position:relative;top:2px">−</span>2</div>
<div class="c el" style="left:2036px;width:280px"><span style="position:relative;top:2px">−</span>46116860184260113…</div>
<div class="c el" style="left:2356px;width:280px">138350580552835402…</div>
<div class="c r" style="left:2676px;width:280px"><span style="position:relative;top:2px">−</span>2.0000000006</div>
</div>
<div class="row" style="left:0;top:768px">
<div class="c" style="left:20px;font-weight:bold">11</div>
<div class="c" style="left:896px;color:#80b29b">0000</div>
<div class="dot" style="left:986px;top:13px"></div>
<div class="dot" style="left:1004px;top:13px"></div>
<div class="dot" style="left:1022px;top:13px"></div>
<div class="dot" style="left:1040px;top:13px"></div>
<div class="dot" style="left:1058px;top:13px"></div>
<div class="dot" style="left:1076px;top:13px"></div>
<div class="dot" style="left:1094px;top:13px"></div>
<div class="dot" style="left:1112px;top:13px"></div>
<div class="dot" style="left:986px;top:31px"></div>
<div class="dot" style="left:1004px;top:31px"></div>
<div class="dot" style="left:1022px;top:31px"></div>
<div class="dot" style="left:1040px;top:31px"></div>
<div class="dot" style="left:1058px;top:31px"></div>
<div class="dot" style="left:1076px;top:31px"></div>
<div class="dot" style="left:1094px;top:31px"></div>
<div class="dot" style="left:1112px;top:31px"></div>
<div class="c r z" style="left:1156px;width:100px">0</div>
<div class="c r z" style="left:1296px;width:100px">0</div>
<div class="c r" style="left:1436px;width:160px">21</div>
<div class="c r" style="left:1636px;width:160px">21</div>
<div class="c r z" style="left:1836px;width:160px">0</div>
<div class="c r" style="left:2036px;width:280px">90211046213</div>
<div class="c r" style="left:2356px;width:280px">90211046213</div>
<div class="c r z" style="left:2676px;width:280px">0</div>
</div>
<div class="row" style="left:0;top:824px">
<div class="c" style="left:20px;font-weight:bold">12</div>
<div class="c" style="left:896px;color:#80b29b">0015</div>
<div class="dot" style="left:986px;top:13px"></div>
<div class="dot" style="left:1004px;top:13px"></div>
<div class="dot" style="left:1022px;top:13px"></div>
<div class="dot" style="left:1040px;top:13px"></div>
<div class="dot" style="left:1058px;top:13px"></div>
<div class="dot" style="left:1076px;top:13px"></div>
<div class="dot" style="left:1094px;top:13px"></div>
<div class="dot" style="left:1112px;top:13px"></div>
<div class="dot" style="left:986px;top:31px"></div>
<div class="dot" style="left:1004px;top:31px"></div>
<div class="dot" style="left:1022px;top:31px"></div>
<div class="dot on" style="left:1040px;top:31px"></div>
<div class="dot" style="left:1058px;top:31px"></div>
<div class="dot on" style="left:1076px;top:31px"></div>
<div class="dot" style="left:1094px;top:31px"></div>
<div class="dot on" style="left:1112px;top:31px"></div>
<div class="c r" style="left:1156px;width:100px">21</div>
<div class="c r" style="left:1296px;width:100px">21</div>
<div class="c r" style="left:1436px;width:160px">1376511</div>
<div class="c r" style="left:1636px;width:160px">1376511</div>
<div class="c r z" style="left:1836px;width:160px">0</div>
<div class="c r" style="left:2036px;width:280px">5912071124626737</div>
<div class="c r" style="left:2356px;width:280px">5912071124626737</div>
<div class="c r z" style="left:2676px;width:280px">0</div>
</div>
<div class="row" style="left:0;top:880px">
<div class="c" style="left:20px;font-weight:bold">13</div>
<div class="c" style="left:896px;color:#80b29b">00FF</div>
<div class="dot" style="left:986px;top:13px"></div>
<div class="dot" style="left:1004px;top:13px"></div>
<div class="dot" style="left:1022px;top:13px"></div>
<div class="dot" style="left:1040px;top:13px"></div>
<div class="dot" style="left:1058px;top:13px"></div>
<div class="dot" style="left:1076px;top:13px"></div>
<div class="dot" style="left:1094px;top:13px"></div>
<div class="dot" style="left:1112px;top:13px"></div>
<div class="dot on" style="left:986px;top:31px"></div>
<div class="dot on" style="left:1004px;top:31px"></div>
<div class="dot on" style="left:1022px;top:31px"></div>
<div class="dot on" style="left:1040px;top:31px"></div>
<div class="dot on" style="left:1058px;top:31px"></div>
<div class="dot on" style="left:1076px;top:31px"></div>
<div class="dot on" style="left:1094px;top:31px"></div>
<div class="dot on" style="left:1112px;top:31px"></div>
<div class="c r" style="left:1156px;width:100px">255</div>
<div class="c r" style="left:1296px;width:100px">255</div>
<div class="c r" style="left:1436px;width:160px">16732997</div>
<div class="c r" style="left:1636px;width:160px">16732997</div>
<div class="c r z" style="left:1836px;width:160px">0</div>
<div class="c r" style="left:2036px;width:280px">71867675637264459</div>
<div class="c r" style="left:2356px;width:280px">71867675637264459</div>
<div class="c r z" style="left:2676px;width:280px">0</div>
</div>
<div class="row" style="left:0;top:936px">
<div class="c" style="left:20px;font-weight:bold">14</div>
<div class="c" style="left:896px;color:#80b29b">5345</div>
<div class="dot" style="left:986px;top:13px"></div>
<div class="dot on" style="left:1004px;top:13px"></div>
<div class="dot" style="left:1022px;top:13px"></div>
<div class="dot on" style="left:1040px;top:13px"></div>
<div class="dot" style="left:1058px;top:13px"></div>
<div class="dot" style="left:1076px;top:13px"></div>
<div class="dot on" style="left:1094px;top:13px"></div>
<div class="dot on" style="left:1112px;top:13px"></div>
<div class="dot" style="left:986px;top:31px"></div>
<div class="dot on" style="left:1004px;top:31px"></div>
<div class="dot" style="left:1022px;top:31px"></div>
<div class="dot" style="left:1040px;top:31px"></div>
<div class="dot" style="left:1058px;top:31px"></div>
<div class="dot on" style="left:1076px;top:31px"></div>
<div class="dot" style="left:1094px;top:31px"></div>
<div class="dot on" style="left:1112px;top:31px"></div>
<div class="c r" style="left:1156px;width:100px">21317</div>
<div class="c r" style="left:1296px;width:100px">21317</div>
<div class="c r" style="left:1436px;width:160px">1397042481</div>
<div class="c r" style="left:1636px;width:160px">1397042481</div>
<div class="c el" style="left:1836px;width:160px">8468667432…</div>
<div class="c r" style="left:2036px;width:280px">6000251767827949979</div>
<div class="c r" style="left:2356px;width:280px">6000251767827949979</div>
<div class="c el" style="left:2676px;width:280px">1.3803954287815814…</div>
</div>
<div class="row" style="left:0;top:992px">
<div class="c" style="left:20px;font-weight:bold">15</div>
<div class="c" style="left:896px;color:#80b29b">2D31</div>
<div class="dot" style="left:986px;top:13px"></div>
<div class="dot" style="left:1004px;top:13px"></div>
<div class="dot on" style="left:1022px;top:13px"></div>
<div class="dot" style="left:1040px;top:13px"></div>
<div class="dot on" style="left:1058px;top:13px"></div>
<div class="dot on" style="left:1076px;top:13px"></div>
<div class="dot" style="left:1094px;top:13px"></div>
<div class="dot on" style="left:1112px;top:13px"></div>
<div class="dot" style="left:986px;top:31px"></div>
<div class="dot" style="left:1004px;top:31px"></div>
<div class="dot on" style="left:1022px;top:31px"></div>
<div class="dot on" style="left:1040px;top:31px"></div>
<div class="dot" style="left:1058px;top:31px"></div>
<div class="dot" style="left:1076px;top:31px"></div>
<div class="dot" style="left:1094px;top:31px"></div>
<div class="dot on" style="left:1112px;top:31px"></div>
<div class="c r" style="left:1156px;width:100px">11569</div>
<div class="c r" style="left:1296px;width:100px">11569</div>
<div class="c r" style="left:1436px;width:160px">758198347</div>
<div class="c r" style="left:1636px;width:160px">758198347</div>
<div class="c r z" style="left:1836px;width:160px">0</div>
<div class="c r" style="left:2036px;width:280px">3256437106018059533</div>
<div class="c r" style="left:2356px;width:280px">3256437106018059533</div>
<div class="c r z" style="left:2676px;width:280px">0</div>
</div>
<div class="row" style="left:0;top:1048px">
<div class="c" style="left:20px;font-weight:bold">16</div>
<div class="c" style="left:896px;color:#80b29b">304B</div>
<div class="dot" style="left:986px;top:13px"></div>
<div class="dot" style="left:1004px;top:13px"></div>
<div class="dot on" style="left:1022px;top:13px"></div>
<div class="dot on" style="left:1040px;top:13px"></div>
<div class="dot" style="left:1058px;top:13px"></div>
<div class="dot" style="left:1076px;top:13px"></div>
<div class="dot" style="left:1094px;top:13px"></div>
<div class="dot" style="left:1112px;top:13px"></div>
<div class="dot" style="left:986px;top:31px"></div>
<div class="dot on" style="left:1004px;top:31px"></div>
<div class="dot" style="left:1022px;top:31px"></div>
<div class="dot" style="left:1040px;top:31px"></div>
<div class="dot on" style="left:1058px;top:31px"></div>
<div class="dot" style="left:1076px;top:31px"></div>
<div class="dot on" style="left:1094px;top:31px"></div>
<div class="dot on" style="left:1112px;top:31px"></div>
<div class="c r" style="left:1156px;width:100px">12363</div>
<div class="c r" style="left:1296px;width:100px">12363</div>
<div class="c r" style="left:1436px;width:160px">810248603</div>
<div class="c r" style="left:1636px;width:160px">810248603</div>
<div class="c r z" style="left:1836px;width:160px">0</div>
<div class="c r" style="left:2036px;width:280px">3479991253746909210</div>
<div class="c r" style="left:2356px;width:280px">3479991253746909210</div>
<div class="c r z" style="left:2676px;width:280px">0</div>
</div>
<div class="row" style="left:0;top:1104px">
<div class="c" style="left:20px;font-weight:bold">17</div>
<div class="c" style="left:896px;color:#80b29b">699B</div>
<div class="dot" style="left:986px;top:13px"></div>
<div class="dot on" style="left:1004px;top:13px"></div>
<div class="dot on" style="left:1022px;top:13px"></div>
<div class="dot" style="left:1040px;top:13px"></div>
<div class="dot on" style="left:1058px;top:13px"></div>
<div class="dot" style="left:1076px;top:13px"></div>
<div class="dot" style="left:1094px;top:13px"></div>
<div class="dot on" style="left:1112px;top:13px"></div>
<div class="dot on" style="left:986px;top:31px"></div>
<div class="dot" style="left:1004px;top:31px"></div>
<div class="dot" style="left:1022px;top:31px"></div>
<div class="dot on" style="left:1040px;top:31px"></div>
<div class="dot on" style="left:1058px;top:31px"></div>
<div class="dot" style="left:1076px;top:31px"></div>
<div class="dot on" style="left:1094px;top:31px"></div>
<div class="dot on" style="left:1112px;top:31px"></div>
<div class="c r" style="left:1156px;width:100px">27035</div>
<div class="c r" style="left:1296px;width:100px">27035</div>
<div class="c r" style="left:1436px;width:160px">1771799821</div>
<div class="c r" style="left:1636px;width:160px">1771799821</div>
<div class="c el" style="left:1836px;width:160px">2.35014770…</div>
<div class="c r" style="left:2036px;width:280px">7609822286255358486</div>
<div class="c r" style="left:2356px;width:280px">7609822286255358486</div>
<div class="c el" style="left:2676px;width:280px">5.266247818388882e…</div>
</div>
<div class="row" style="left:0;top:1160px">
<div class="c" style="left:20px;font-weight:bold">18</div>
<div class="c" style="left:896px;color:#80b29b">850D</div>
<div class="dot on" style="left:986px;top:13px"></div>
<div class="dot" style="left:1004px;top:13px"></div>
<div class="dot" style="left:1022px;top:13px"></div>
<div class="dot" style="left:1040px;top:13px"></div>
<div class="dot" style="left:1058px;top:13px"></div>
<div class="dot on" style="left:1076px;top:13px"></div>
<div class="dot" style="left:1094px;top:13px"></div>
<div class="dot on" style="left:1112px;top:13px"></div>
<div class="dot" style="left:986px;top:31px"></div>
<div class="dot" style="left:1004px;top:31px"></div>
<div class="dot" style="left:1022px;top:31px"></div>
<div class="dot" style="left:1040px;top:31px"></div>
<div class="dot on" style="left:1058px;top:31px"></div>
<div class="dot on" style="left:1076px;top:31px"></div>
<div class="dot" style="left:1094px;top:31px"></div>
<div class="dot on" style="left:1112px;top:31px"></div>
<div class="c r" style="left:1156px;width:100px"><span style="position:relative;top:2px">−</span>31475</div>
<div class="c r" style="left:1296px;width:100px">34061</div>
<div class="c r" style="left:1436px;width:160px"><span style="position:relative;top:2px">−</span>2062745574</div>
<div class="c r" style="left:1636px;width:160px">2232221722</div>
<div class="c r z" style="left:1836px;width:160px">0</div>
<div class="c el" style="left:2036px;width:280px"><span style="position:relative;top:2px">−</span>88594247802637460…</div>
<div class="c r" style="left:2356px;width:280px">9587319293445805605</div>
<div class="c r z" style="left:2676px;width:280px">0</div>
</div>
<div class="row" style="left:0;top:1216px">
<div class="c" style="left:20px;font-weight:bold">19</div>
<div class="c" style="left:896px;color:#80b29b">001A</div>
<div class="dot" style="left:986px;top:13px"></div>
<div class="dot" style="left:1004px;top:13px"></div>
<div class="dot" style="left:1022px;top:13px"></div>
<div class="dot" style="left:1040px;top:13px"></div>
<div class="dot" style="left:1058px;top:13px"></div>
<div class="dot" style="left:1076px;top:13px"></div>
<div class="dot" style="left:1094px;top:13px"></div>
<div class="dot" style="left:1112px;top:13px"></div>
<div class="dot" style="left:986px;top:31px"></div>
<div class="dot" style="left:1004px;top:31px"></div>
<div class="dot" style="left:1022px;top:31px"></div>
<div class="dot on" style="left:1040px;top:31px"></div>
<div class="dot on" style="left:1058px;top:31px"></div>
<div class="dot" style="left:1076px;top:31px"></div>
<div class="dot on" style="left:1094px;top:31px"></div>
<div class="dot" style="left:1112px;top:31px"></div>
<div class="c r" style="left:1156px;width:100px">26</div>
<div class="c r" style="left:1296px;width:100px">26</div>
<div class="c r" style="left:1436px;width:160px">1704470</div>
<div class="c r" style="left:1636px;width:160px">1704470</div>
<div class="c r z" style="left:1836px;width:160px">0</div>
<div class="c r" style="left:2036px;width:280px">7320643278537913</div>
<div class="c r" style="left:2356px;width:280px">7320643278537913</div>
<div class="c r z" style="left:2676px;width:280px">0</div>
</div>
<div class="row" style="left:0;top:1272px">
<div class="c" style="left:20px;font-weight:bold">20</div>
<div class="c" style="left:896px;color:#80b29b">0216</div>
<div class="dot" style="left:986px;top:13px"></div>
<div class="dot" style="left:1004px;top:13px"></div>
<div class="dot" style="left:1022px;top:13px"></div>
<div class="dot" style="left:1040px;top:13px"></div>
<div class="dot" style="left:1058px;top:13px"></div>
<div class="dot" style="left:1076px;top:13px"></div>
<div class="dot on" style="left:1094px;top:13px"></div>
<div class="dot" style="left:1112px;top:13px"></div>
<div class="dot" style="left:986px;top:31px"></div>
<div class="dot" style="left:1004px;top:31px"></div>
<div class="dot" style="left:1022px;top:31px"></div>
<div class="dot on" style="left:1040px;top:31px"></div>
<div class="dot" style="left:1058px;top:31px"></div>
<div class="dot on" style="left:1076px;top:31px"></div>
<div class="dot on" style="left:1094px;top:31px"></div>
<div class="dot" style="left:1112px;top:31px"></div>
<div class="c r" style="left:1156px;width:100px">534</div>
<div class="c r" style="left:1296px;width:100px">534</div>
<div class="c r" style="left:1436px;width:160px">35001893</div>
<div class="c r" style="left:1636px;width:160px">35001893</div>
<div class="c r z" style="left:1836px;width:160px">0</div>
<div class="c r z" style="left:2036px;width:280px">0</div>
<div class="c r z" style="left:2356px;width:280px">0</div>
<div class="c r z" style="left:2676px;width:280px">0</div>
</div>
<div class="row" style="left:0;top:1328px">
<div class="c" style="left:20px;font-weight:bold">21</div>
<div class="c" style="left:896px;color:#80b29b">1625</div>
<div class="dot" style="left:986px;top:13px"></div>
<div class="dot" style="left:1004px;top:13px"></div>
<div class="dot" style="left:1022px;top:13px"></div>
<div class="dot on" style="left:1040px;top:13px"></div>
<div class="dot" style="left:1058px;top:13px"></div>
<div class="dot on" style="left:1076px;top:13px"></div>
<div class="dot on" style="left:1094px;top:13px"></div>
<div class="dot" style="left:1112px;top:13px"></div>
<div class="dot" style="left:986px;top:31px"></div>
<div class="dot" style="left:1004px;top:31px"></div>
<div class="dot on" style="left:1022px;top:31px"></div>
<div class="dot" style="left:1040px;top:31px"></div>
<div class="dot" style="left:1058px;top:31px"></div>
<div class="dot on" style="left:1076px;top:31px"></div>
<div class="dot" style="left:1094px;top:31px"></div>
<div class="dot on" style="left:1112px;top:31px"></div>
<div class="c r" style="left:1156px;width:100px">5669</div>
<div class="c r" style="left:1296px;width:100px">5669</div>
<div class="c r" style="left:1436px;width:160px">371524793</div>
<div class="c r" style="left:1636px;width:160px">371524793</div>
<div class="c r z" style="left:1836px;width:160px">0</div>
<div class="c r z" style="left:2036px;width:280px">0</div>
<div class="c r z" style="left:2356px;width:280px">0</div>
<div class="c r z" style="left:2676px;width:280px">0</div>
</div>
<div class="row" style="left:0;top:1384px">
<div class="c" style="left:20px;font-weight:bold">22</div>
<div class="c" style="left:896px;color:#80b29b">04B9</div>
<div class="dot" style="left:986px;top:13px"></div>
<div class="dot" style="left:1004px;top:13px"></div>
<div class="dot" style="left:1022px;top:13px"></div>
<div class="dot" style="left:1040px;top:13px"></div>
<div class="dot" style="left:1058px;top:13px"></div>
<div class="dot on" style="left:1076px;top:13px"></div>
<div class="dot" style="left:1094px;top:13px"></div>
<div class="dot" style="left:1112px;top:13px"></div>
<div class="dot on" style="left:986px;top:31px"></div>
<div class="dot" style="left:1004px;top:31px"></div>
<div class="dot on" style="left:1022px;top:31px"></div>
<div class="dot on" style="left:1040px;top:31px"></div>
<div class="dot on" style="left:1058px;top:31px"></div>
<div class="dot" style="left:1076px;top:31px"></div>
<div class="dot" style="left:1094px;top:31px"></div>
<div class="dot on" style="left:1112px;top:31px"></div>
<div class="c r" style="left:1156px;width:100px">1209</div>
<div class="c r" style="left:1296px;width:100px">1209</div>
<div class="c r z" style="left:1436px;width:160px">0</div>
<div class="c r z" style="left:1636px;width:160px">0</div>
<div class="c r z" style="left:1836px;width:160px">0</div>
<div class="c r z" style="left:2036px;width:280px">0</div>
<div class="c r z" style="left:2356px;width:280px">0</div>
<div class="c r z" style="left:2676px;width:280px">0</div>
</div>
<div class="a" style="left:0;top:1650px;width:2482px;height:16px;background:#1f1f1f;border-radius:8px"></div>
<div class="a" style="left:0;top:1666px;width:2860px;height:2px;background:#515151"></div>
<div class="a" style="left:0;top:1668px;width:2860px;height:70px;background:#2a2a2a"></div>
</div>
<div class="a" style="left:74px;top:1844px;font-size:22px;line-height:30px;color:#a0a0a0;letter-spacing:0.22px;white-space:nowrap">Last transaction time: <b>2026-02-22 23:37:04</b></div>
<div class="a" style="left:2214px;top:1842px;font-size:25px;line-height:32px;color:#e6e6e6;white-space:nowrap">Rows per page:</div>
<div class="a" style="left:2421px;top:1843px;font-size:25px;line-height:32px;color:#fff;white-space:nowrap">100</div>
<svg class="a" style="left:2482px;top:1855px" width="18" height="10" viewBox="0 0 18 10"><path fill="#fff" d="M0 0h18L9 9.5z"/></svg>
<div class="a" style="left:2576px;top:1843px;font-size:25px;line-height:32px;color:#fff;white-space:nowrap">1–23 of 23</div>
<svg class="a" style="left:2750px;top:1837px" width="42" height="42" viewBox="0 0 24 24"><path fill="#6a6a6a" d="M15.41 7.41 14 6l-6 6 6 6 1.41-1.41L10.83 12z"/></svg>
<svg class="a" style="left:2824px;top:1837px" width="42" height="42" viewBox="0 0 24 24"><path fill="#6a6a6a" d="M10 6 8.59 7.41 13.17 12l-4.58 4.59L10 18l6-6z"/></svg>
</div></body></html>
